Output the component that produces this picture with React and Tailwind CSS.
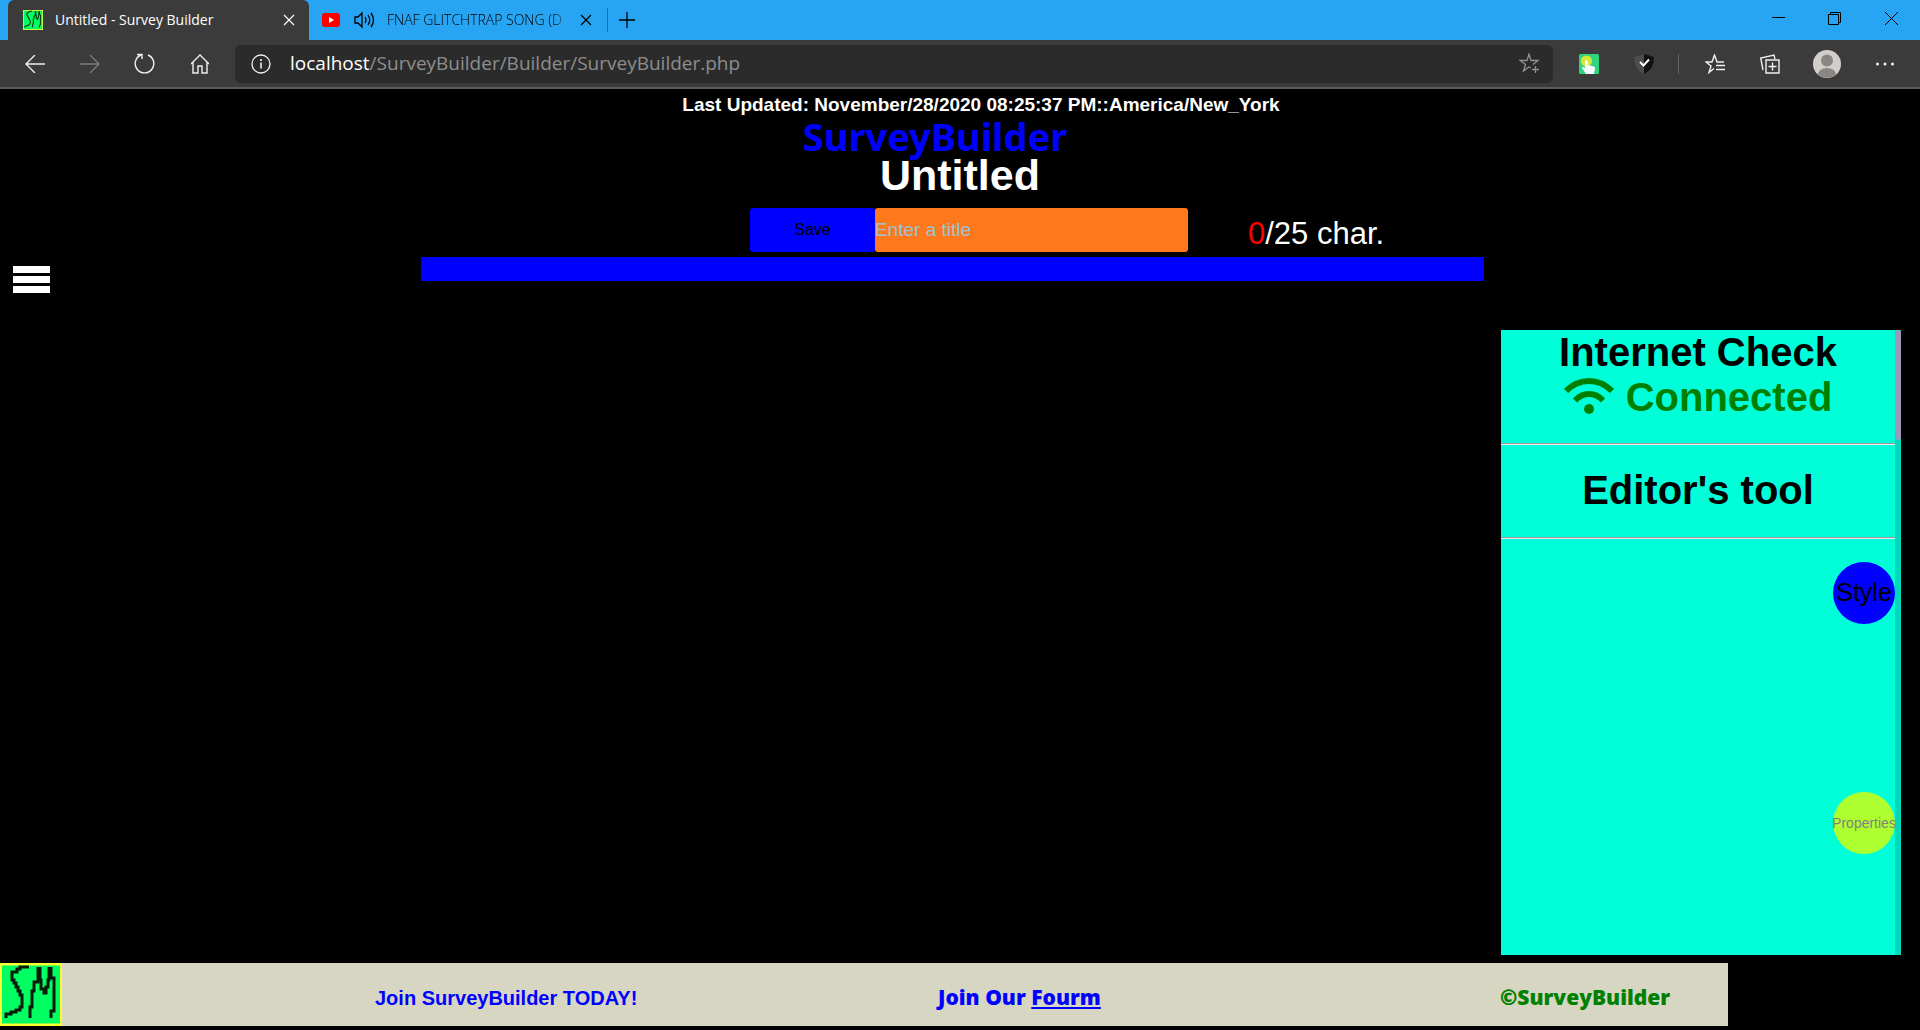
const ib = "shrink-0 flex items-center justify-center";

function Logo({ className }) {
  return (
    <svg className={className} viewBox="0 0 62 63" preserveAspectRatio="none" aria-hidden="true">
      <rect width="62" height="63" fill="#ffff32" />
      <rect x="2" y="2.500" width="58" height="58" fill="#00ff62" />
      <g fill="none" stroke="#0a1a08" strokeWidth="3">
        <path d="M29 4H20V6H17V9H12V17H14V20H16V24H18V28H20V32H22V44H20V47H16V49H11V51H6V55" />
        <path d="M30 55V44H32V28H34V19H38V4" />
        <path d="M40 4V17H41V26H44V30H46V24H48V17H49V4" />
        <path d="M51 4V15H54V48H51V55" />
      </g>
    </svg>
  );
}

function Browser() {
  return (
    <header className="font-['Open_Sans','Noto_Sans',sans-serif]">
      <div className="flex h-10 bg-[#27a4f2] text-black">
        <div className="ml-2 flex h-10 w-[301px] items-center rounded-t-md bg-[#3b3b3b] pl-[15px] pr-2 text-white">
          <Logo className="h-5 w-5" />
          <span className="ml-3 flex-1 whitespace-nowrap text-sm">Untitled - Survey Builder</span>
          <button aria-label="Close tab" className={`${ib} h-6 w-6`}>
            <svg width="12" height="12" viewBox="0 0 12 12" stroke="currentColor" strokeWidth="1.200"><path d="M1 1L11 11M11 1L1 11" /></svg>
          </button>
        </div>
        <div className="flex h-10 w-[298px] items-center pl-[13px]">
          <svg width="18" height="14" viewBox="0 0 18 14"><rect width="18" height="14" rx="3" fill="#f00" /><path d="M7 4V10L12 7Z" fill="#fff" /></svg>
          <svg className="ml-[14px]" width="21" height="18" viewBox="0 0 21 18" fill="none" stroke="currentColor" strokeWidth="1.300">
            <path d="M1 6H4L8 2V16L4 12H1ZM11 6Q13 9 11 12M14 4Q17.500 9 14 14M17 2Q22 9 17 16" />
          </svg>
          <span className="ml-3 w-[183px] overflow-hidden whitespace-nowrap text-sm font-light [mask-image:linear-gradient(to_right,#000_90%,transparent)]">FNAF GLITCHTRAP SONG (D</span>
          <button aria-label="Close tab" className={`${ib} ml-1 h-6 w-6`}>
            <svg width="12" height="12" viewBox="0 0 12 12" stroke="currentColor" strokeWidth="1.200"><path d="M1 1L11 11M11 1L1 11" /></svg>
          </button>
        </div>
        <div className="mt-2 h-6 w-px bg-[#1d6fa3]" />
        <button aria-label="New tab" className={`${ib} h-10 w-[38px]`}>
          <svg width="16" height="16" viewBox="0 0 16 16" stroke="currentColor" strokeWidth="1.300"><path d="M0 8H16M8 0V16" /></svg>
        </button>
        <div className="ml-auto flex">
          <button aria-label="Minimize" className={`${ib} h-9 w-14`}><svg width="13" height="13" viewBox="0 0 13 13" stroke="currentColor"><path d="M0 5.500H13" /></svg></button>
          <button aria-label="Restore" className={`${ib} h-9 w-14`}><svg width="13" height="13" viewBox="0 0 13 13" fill="none" stroke="currentColor"><path d="M.5 2.500H10.500V12.500H.5ZM2.500 2.500V.5H12.500V10.500H10.500" /></svg></button>
          <button aria-label="Close window" className={`${ib} h-9 w-[58px]`}><svg width="13" height="13" viewBox="0 0 13 13" stroke="currentColor"><path d="M0 0L13 13M13 0L0 13" /></svg></button>
        </div>
      </div>
      <div className="flex h-[49px] items-center border-b-2 border-[#5c5c5c] bg-[#3b3b3b] pl-[7px] text-[#f0f0f0]">
        <button aria-label="Back" className={`${ib} h-10 w-[55px]`}><svg width="20" height="18" viewBox="0 0 20 18" fill="none" stroke="currentColor" strokeWidth="1.400"><path d="M20 9H1M10 0L1 9L10 18" /></svg></button>
        <button aria-label="Forward" disabled className={`${ib} h-10 w-[55px] text-[#7c7c7c]`}><svg width="20" height="18" viewBox="0 0 20 18" fill="none" stroke="currentColor" strokeWidth="1.400"><path d="M0 9H19M10 0L19 9L10 18" /></svg></button>
        <button aria-label="Refresh" className={`${ib} h-10 w-[55px]`}><svg width="21" height="21" viewBox="0 0 21 21" fill="none" stroke="currentColor" strokeWidth="1.400"><path d="M14 2A9.300 9.300 0 1 1 7 2M3 1.500H8V6" /></svg></button>
        <button aria-label="Home" className={`${ib} h-10 w-[55px]`}><svg width="18" height="20" viewBox="0 0 18 20" fill="none" stroke="currentColor" strokeWidth="1.400"><path d="M0 10L9 1L18 10M2 8.500V19H7V12H11V19H16V8.500" /></svg></button>
        <div className="ml-2 flex h-[38px] flex-1 items-center rounded-md bg-[#2b2b2b] pl-4 pr-3 text-[19px]">
          <svg width="20" height="20" viewBox="0 0 20 20" fill="none" stroke="currentColor" strokeWidth="1.300"><circle cx="10" cy="10" r="9" /><path d="M10 8.500V14.500M10 5V7" strokeWidth="1.600" /></svg>
          <span className="ml-[19px] flex-1 whitespace-nowrap text-[#8e8e8e]"><span className="text-white">localhost</span>/SurveyBuilder/Builder/SurveyBuilder.php</span>
          <button aria-label="Add to favorites" className={`${ib} h-6 w-6 text-[#909090]`}><svg width="21" height="21" viewBox="0 0 21 21" fill="none" stroke="currentColor" strokeWidth="1.300"><path d="M12 15L10 14L4.500 18L6.500 11.500L1 7.500H8L10 1L12 7.500H19L14 11.500M16.500 13V20M13 16.500H20" /></svg></button>
        </div>
        <button aria-label="Click extension" className={`${ib} ml-2 h-10 w-[55px]`}><svg width="20" height="20" viewBox="0 0 20 20"><rect width="20" height="20" rx="1.500" fill="#2fd57c" /><circle cx="7.500" cy="7" r="5.500" fill="#d9e63b" /><path d="M6 8Q6 6 7.500 6T9 8V11L15 12.500Q16.500 13 16 15L15 20H7L3 14Q3.500 12 6 14Z" fill="#f5faff" /></svg></button>
        <button aria-label="Shield extension" className={`${ib} h-10 w-[55px]`}><svg width="20" height="20" viewBox="0 0 20 20"><path d="M10 0L0 3Q0 16 10 20Z" fill="#4c4c4c" /><path d="M10 0L20 3Q20 16 10 20Z" fill="#111" /><path d="M6 8L9.500 11.500L15 5.500" fill="none" stroke="#fff" strokeWidth="2" /></svg></button>
        <div className="ml-[7px] h-5 w-px bg-[#646464]" />
        <button aria-label="Favorites" className={`${ib} ml-2 h-10 w-[55px]`}><svg width="20" height="20" viewBox="0 0 20 20" fill="none" stroke="currentColor" strokeWidth="1.400"><path d="M9 14.500L4 18.500L6 12L1 8H7L9.500 1L12 8H19M11 11.500H20M11 15.500H20" /></svg></button>
        <button aria-label="Collections" className={`${ib} h-10 w-[55px]`}><svg width="20" height="20" viewBox="0 0 20 20" fill="none" stroke="currentColor" strokeWidth="1.400"><path d="M3 16L.7 4L14 1L15 5M6 6H19V19H6ZM12.500 8.500V16.500M8.500 12.500H16.500" /></svg></button>
        <button aria-label="Profile" className={`${ib} h-10 w-[60px]`}><svg width="28" height="28" viewBox="0 0 28 28"><circle cx="14" cy="14" r="14" fill="#d2cfcb" /><circle cx="14" cy="10.500" r="6" fill="#8a8683" /><path d="M5 24.500Q6 18 14 18T23 24.500A14 14 0 0 1 5 24.500" fill="#8a8683" /></svg></button>
        <button aria-label="Settings and more" className={`${ib} mr-2 h-10 w-[55px]`}><svg width="18" height="4" viewBox="0 0 18 4" fill="currentColor"><circle cx="1.500" cy="2" r="1.500" /><circle cx="9" cy="2" r="1.500" /><circle cx="16.500" cy="2" r="1.500" /></svg></button>
      </div>
    </header>
  );
}

export default function App() {
  return (
    <div className="flex min-h-screen flex-col bg-black font-['Liberation_Sans',Arial,sans-serif] text-white">
      <Browser />
      <main className="flex flex-1 flex-col">
        <p className="mt-1 pl-[42px] text-center text-[19px] leading-6 font-bold">Last Updated: November/28/2020 08:25:37 PM::America/New_York</p>
        <h1 className="-mt-1 h-11 pr-[50px] text-center font-['Comic_Sans_MS','Noto_Sans',sans-serif] text-[38px] leading-[46px] font-bold text-[#00f]">SurveyBuilder</h1>
        <h2 className="-mt-1 text-center text-[43px] leading-[44px] font-bold">Untitled</h2>
        <form className="mt-[11px] flex h-11 items-stretch pl-[39.06%]">
          <button type="button" className="w-[125px] rounded-[3px] bg-[#00f] text-base text-black">Save</button>
          <input aria-label="Title" placeholder="Enter a title" className="w-[313px] rounded-[3px] bg-[#ff781c] text-[19px] placeholder:text-[#9ac4d4]" />
          <p className="ml-[60px] pt-[5px] text-[31px] leading-[42px] whitespace-nowrap"><span className="text-[#f00]">0</span>/25 char.</p>
        </form>
        <div className="mt-[5px] flex items-start">
          <button aria-label="Menu" className="mt-[9px] ml-[13px] flex w-[37px] flex-col gap-[3px]">
            <span className="h-[7px] w-full bg-white" />
            <span className="h-[7px] w-full bg-white" />
            <span className="h-[7px] w-full bg-white" />
          </button>
          <div className="mr-[436px] ml-[371px] h-6 flex-1 bg-[#00f]" />
        </div>
        <aside className="mt-[37px] mr-[19px] flex flex-1 self-end bg-[#00ffd9] text-black">
          <div className="flex w-[394px] flex-col">
            <section className="h-[113px] text-center text-[40px] leading-[45px] font-bold">
              <h2>Internet Check</h2>
              <p className="flex items-center justify-center gap-3 text-[#008000]">
                <svg className="mb-1" width="50" height="36" viewBox="0 0 50 36" fill="none" stroke="currentColor" strokeWidth="6"><path d="M2 13Q12 3 25 3T48 13M11 22.500Q17 16 25 16T39 22.500" /><circle cx="25" cy="31" r="5" fill="currentColor" stroke="none" /></svg>
                Connected
              </p>
            </section>
            <hr className="border-t border-b border-t-[#9a9a9a] border-b-[#eee]" />
            <h2 className="pt-[23px] pb-[25px] text-center text-[40px] leading-[44px] font-bold">Editor's tool</h2>
            <hr className="border-t border-b border-t-[#9a9a9a] border-b-[#eee]" />
            <div className="mt-[23px] flex flex-col items-end gap-[168px]">
              <button className={`${ib} h-[62px] w-[62px] rounded-full bg-[#00f] text-[25px]`}>Style</button>
              <button disabled className={`${ib} h-[62px] w-[62px] rounded-full bg-[#adff2f] text-sm text-[#808080]`}>Properties</button>
            </div>
          </div>
          <div className="w-[6px] bg-[#00d9bb]"><div className="h-[110px] rounded-[3px] bg-[#9c98b8]" /></div>
        </aside>
      </main>
      <footer className="mt-2 mb-1 flex h-[63px] w-[90%] bg-[#d7d6c2]">
        <Logo className="h-[63px] w-[62px] shrink-0" />
        <p className="ml-[313px] w-[563px] pt-[23px] text-xl leading-6 font-bold whitespace-nowrap text-[#00f]">Join SurveyBuilder TODAY!</p>
        <p className="w-[562px] pt-5 font-['Open_Sans',sans-serif] text-[21px] leading-7 font-extrabold whitespace-nowrap text-[#00f]">Join Our <a href="#forum" className="underline">Fourm</a></p>
        <p className="pt-5 font-['Open_Sans',sans-serif] text-[21px] leading-7 font-extrabold whitespace-nowrap text-[#008000]">©SurveyBuilder</p>
      </footer>
    </div>
  );
}
